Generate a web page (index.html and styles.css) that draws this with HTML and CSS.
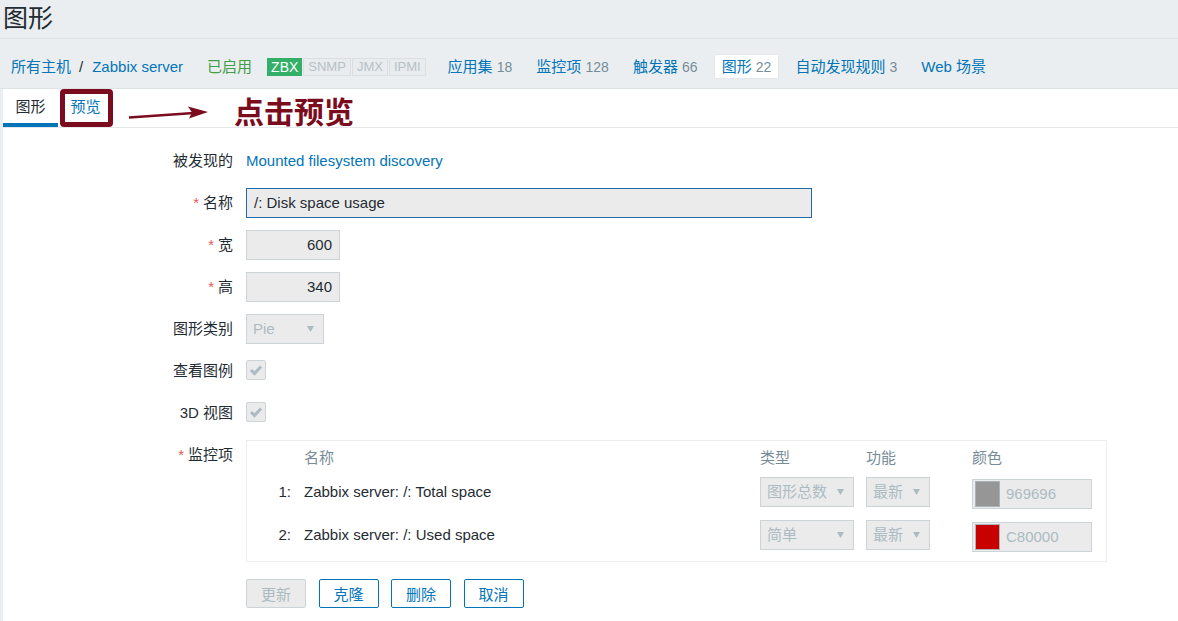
FILE: index.html
```html
<!DOCTYPE html>
<html lang="zh-CN">
<head>
<meta charset="utf-8">
<title>图形</title>
<link rel="stylesheet" href="styles.css">
</head>
<body>
<header class="page-title"><h1>图形</h1></header>

<nav class="host-nav">
  <a class="link">所有主机</a>
  <span class="sep">/</span>
  <a class="link">Zabbix server</a>
  <span class="status">已启用</span>
  <div class="badges">
    <span class="badge on">ZBX</span>
    <span class="badge">SNMP</span>
    <span class="badge">JMX</span>
    <span class="badge">IPMI</span>
  </div>
  <a class="nav-item first">应用集 <span class="cnt">18</span></a>
  <a class="nav-item">监控项 <span class="cnt">128</span></a>
  <a class="nav-item">触发器 <span class="cnt">66</span></a>
  <a class="nav-item active">图形 <span class="cnt">22</span></a>
  <a class="nav-item">自动发现规则 <span class="cnt">3</span></a>
  <a class="nav-item">Web 场景</a>
</nav>

<main class="content">
  <div class="tabs">
    <a class="tab active">图形</a>
    <a class="tab">预览</a>
    <div class="annot-box"></div>
    <svg class="annot-arrow" width="86" height="20" viewBox="0 0 86 20">
      <line x1="1" y1="14.5" x2="66" y2="10" stroke="#7a0c1e" stroke-width="2.4"/>
      <polygon points="60,3.5 80,9 61,15.5 64,9.5" fill="#7a0c1e"/>
    </svg>
    <div class="annot-text">点击预览</div>
  </div>

  <div class="form">
    <div class="lbl">被发现的</div>
    <div class="val"><a class="link">Mounted filesystem discovery</a></div>

    <div class="lbl"><span class="req">*</span>名称</div>
    <div class="val"><div class="inp name">/: Disk space usage</div></div>

    <div class="lbl"><span class="req">*</span>宽</div>
    <div class="val"><div class="inp num">600</div></div>

    <div class="lbl"><span class="req">*</span>高</div>
    <div class="val"><div class="inp num">340</div></div>

    <div class="lbl">图形类别</div>
    <div class="val"><div class="sel pie"><span>Pie</span><svg class="tri" width="7" height="6" viewBox="0 0 7 6"><polygon points="0,0 7,0 3.5,6" fill="#acbbc2"/></svg></div></div>

    <div class="lbl">查看图例</div>
    <div class="val"><div class="chk"><svg width="18" height="18" viewBox="0 0 18 18"><polyline points="4,9 7.5,12.5 14,5.5" fill="none" stroke="#acbbc2" stroke-width="3"/></svg></div></div>

    <div class="lbl">3D 视图</div>
    <div class="val"><div class="chk"><svg width="18" height="18" viewBox="0 0 18 18"><polyline points="4,9 7.5,12.5 14,5.5" fill="none" stroke="#acbbc2" stroke-width="3"/></svg></div></div>

    <div class="lbl"><span class="req">*</span>监控项</div>
    <div class="val">
      <div class="items">
        <div class="irow head">
          <span></span><span>名称</span><span>类型</span><span>功能</span><span>颜色</span>
        </div>
        <div class="irow data">
          <span class="no">1:</span>
          <span>Zabbix server: /: Total space</span>
          <div class="sel type"><span>图形总数</span><svg class="tri" width="7" height="6" viewBox="0 0 7 6"><polygon points="0,0 7,0 3.5,6" fill="#acbbc2"/></svg></div>
          <div class="sel func"><span>最新</span><svg class="tri" width="7" height="6" viewBox="0 0 7 6"><polygon points="0,0 7,0 3.5,6" fill="#acbbc2"/></svg></div>
          <div class="color"><span class="swatch" style="background:#969696"></span><span>969696</span></div>
        </div>
        <div class="irow data second">
          <span class="no">2:</span>
          <span>Zabbix server: /: Used space</span>
          <div class="sel type"><span>简单</span><svg class="tri" width="7" height="6" viewBox="0 0 7 6"><polygon points="0,0 7,0 3.5,6" fill="#acbbc2"/></svg></div>
          <div class="sel func"><span>最新</span><svg class="tri" width="7" height="6" viewBox="0 0 7 6"><polygon points="0,0 7,0 3.5,6" fill="#acbbc2"/></svg></div>
          <div class="color"><span class="swatch" style="background:#c80000"></span><span>C80000</span></div>
        </div>
      </div>
    </div>

    <div class="lbl"></div>
    <div class="val buttons">
      <button class="btn disabled">更新</button>
      <button class="btn">克隆</button>
      <button class="btn">删除</button>
      <button class="btn">取消</button>
    </div>
  </div>
</main>
</body>
</html>
```
FILE: styles.css
```css
html, body {
  margin: 0;
  padding: 0;
}
body {
  width: 1178px;
  height: 621px;
  overflow: hidden;
  background: #ebeef0;
  font-family: "Liberation Sans", "Noto Sans CJK SC", sans-serif;
  font-size: 15px;
  color: #1f2c33;
}
a { text-decoration: none; cursor: pointer; }
.link { color: #0275b8; }

.page-title {
  height: 38px;
  border-bottom: 1px solid #dde2e5;
  padding-left: 3px;
}
.page-title h1 {
  margin: 0;
  font-size: 25px;
  font-weight: normal;
  line-height: 36px;
  color: #1f2c33;
}

.host-nav {
  height: 34px;
  padding: 15px 0 0 11px;
  border-bottom: 1px solid #dde2e5;
  display: flex;
  align-items: flex-start;
  line-height: 25px;
  white-space: nowrap;
}
.sep { margin: 0 8px 0 8px; color: #1f2c33; }
.sep + .link { margin-left: 1px; }
.status { color: #429e47; margin-left: 24px; }
.badges {
  display: flex;
  gap: 1px;
  margin: 4px 0 0 15px;
  height: 18px;
}
.badge {
  font-size: 13px;
  line-height: 16px;
  padding: 0 4px;
  border: 1px solid #d9dfe2;
  background: #e9ecee;
  color: #b4c1c7;
}
.badge.on {
  background: #34af67;
  border-color: #34af67;
  color: #fff;
  font-size: 14px;
  padding: 0 3px;
}
.nav-item {
  color: #0275b8;
  padding: 0 8px;
  margin-left: 8px;
  height: 25px;
  border-radius: 2px;
}
.nav-item.first { margin-left: 14px; }
.nav-item.active {
  background: #fff;
  box-shadow: 0 0 0 1px #e3e7ea inset;
}
.cnt { color: #768d99; font-size: 14px; }

.content {
  margin-left: 3px;
  background: #fff;
  height: 532px;
}
.tabs {
  position: relative;
  height: 38px;
  border-bottom: 1px solid #e4e8eb;
  display: flex;
}
.tab {
  padding: 1px 12.5px 0;
  line-height: 33px;
  border-bottom: 4px solid transparent;
  color: #0275b8;
}
.tab.active {
  color: #1f2c33;
  border-bottom-color: #0275b8;
}
.annot-box {
  position: absolute;
  left: 57px;
  top: 0;
  width: 53px;
  height: 38px;
  box-sizing: border-box;
  border: 5px solid #7a0c1e;
  border-radius: 4px;
}
.annot-arrow {
  position: absolute;
  left: 125px;
  top: 14px;
}
.annot-text {
  position: absolute;
  left: 231px;
  top: 5px;
  font-family: "Noto Sans CJK SC", sans-serif;
  font-weight: 700;
  font-size: 30px;
  line-height: 32px;
  color: #7a0c1e;
  white-space: nowrap;
}

.form {
  display: grid;
  grid-template-columns: 230px 861px;
  column-gap: 13px;
  row-gap: 12px;
  padding-top: 18px;
  align-items: start;
}
.lbl {
  text-align: right;
  line-height: 30px;
  min-height: 30px;
  white-space: nowrap;
}
.req {
  color: #e45959;
  margin-right: 4px;
}
.val {
  line-height: 30px;
  min-height: 30px;
}
.inp {
  box-sizing: border-box;
  height: 30px;
  line-height: 28px;
  border: 1px solid #cdd4d8;
  background: #ebebeb;
  padding: 0 7px;
  color: #1f2c33;
}
.inp.name {
  width: 566px;
  border-color: #2469a8;
}
.inp.num {
  width: 94px;
  text-align: right;
}
.sel {
  box-sizing: border-box;
  height: 30px;
  border: 1px solid #cdd4d8;
  background: #ebebeb;
  color: #acbbc2;
  display: flex;
  align-items: center;
  justify-content: space-between;
  padding: 0 9px 0 6px;
  line-height: 28px;
}
.sel.pie { width: 78px; }
.sel.type { width: 94px; }
.sel.func { width: 64px; }
.tri { flex: none; }
.chk {
  box-sizing: border-box;
  width: 20px;
  height: 20px;
  margin-top: 4px;
  border: 1px solid #cdd4d8;
  border-radius: 2px;
  background: #ebebeb;
  display: flex;
  align-items: center;
  justify-content: center;
}

.items {
  border: 1px solid #ebeef0;
  padding: 5px 0 13px;
}
.irow {
  display: grid;
  grid-template-columns: 57px 456px 106px 106px 1fr;
  align-items: center;
  height: 30px;
  line-height: 30px;
  white-space: nowrap;
}
.irow.head {
  height: 24px;
  line-height: 24px;
  color: #768d99;
  margin-bottom: 5px;
}
.irow.second { margin-top: 13px; }
.no {
  text-align: right;
  padding-right: 13px;
}
.color {
  box-sizing: border-box;
  width: 120px;
  height: 30px;
  margin-top: 4px;
  border: 1px solid #cdd4d8;
  background: #ebebeb;
  display: flex;
  align-items: center;
  padding-left: 2px;
  color: #acbbc2;
  line-height: 28px;
}
.swatch {
  box-sizing: border-box;
  width: 25px;
  height: 26px;
  border: 1px solid #a9b4ba;
  margin-right: 6px;
}

.buttons {
  display: flex;
  gap: 12.5px;
  margin-top: 5px;
}
.btn {
  box-sizing: border-box;
  width: 60px;
  height: 29px;
  border: 1px solid #0275b8;
  border-radius: 2px;
  background: #fff;
  color: #0275b8;
  font-family: "Liberation Sans", "Noto Sans CJK SC", sans-serif;
  font-size: 15px;
  padding: 0;
}
.btn.disabled {
  background: #ebebeb;
  border-color: #cdd4d8;
  color: #acbbc2;
}
```
